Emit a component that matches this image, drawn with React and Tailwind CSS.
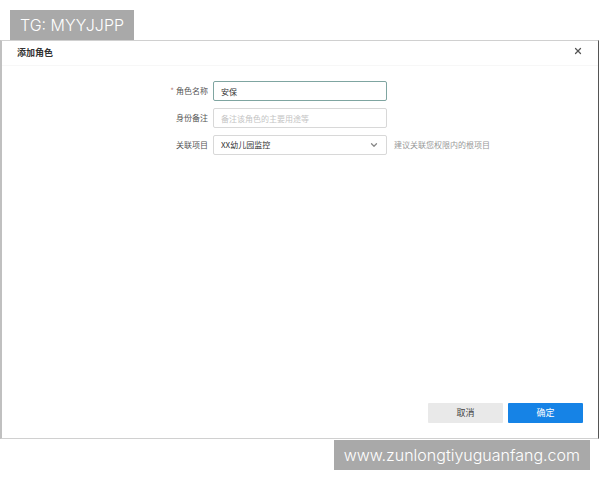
import { ChevronDown, X } from 'lucide-react';

const fieldClass =
  'h-5 w-full rounded-[2px] border bg-white px-[7px] text-[8px] leading-4 text-[#333] outline-none placeholder:text-[#c4c4c4]';

function Field({ id, label, required, hint, children }) {
  return (
    <div className="grid grid-cols-[206fr_174fr_206fr] items-center gap-x-[5px]">
      <label
        htmlFor={id}
        className="text-right text-[8px] leading-5 text-[#555]"
      >
        {required && <span className="mr-0.5 text-[#b08080]">*</span>}
        {label}
      </label>
      <div className="relative flex">{children}</div>
      {hint && <p className="pl-0.5 text-[8px] leading-5 text-[#999]">{hint}</p>}
    </div>
  );
}

function Banner({ children, className }) {
  return (
    <p
      className={`${className} h-[30px] bg-[#a9a9a9] px-2.5 font-['Inter',sans-serif] text-[16px] leading-[30px] font-light text-white`}
    >
      {children}
    </p>
  );
}

export default function App() {
  return (
    <div className="flex min-h-screen flex-col bg-white font-['Noto_Sans_CJK_SC',sans-serif]">
      <Banner className="mt-2.5 ml-2.5 self-start">TG: MYYJJPP</Banner>

      <section
        role="dialog"
        aria-labelledby="dialog-title"
        className="mr-px flex flex-1 flex-col border-y border-r border-l-2 border-y-[#d0d0d0] border-r-[#555] border-l-[#c0c0c0]"
      >
        {/* Header */}
        <header className="flex h-[25px] items-center justify-between border-b border-[#f7f7f7] pr-[15px] pl-[15px]">
          <h1
            id="dialog-title"
            className="text-[9px] leading-4 font-bold text-[#333]"
          >
            添加角色
          </h1>
          <button type="button" aria-label="关闭" className="-mt-1 text-[#555]">
            <X className="size-2.5" strokeWidth={3} />
          </button>
        </header>

        {/* Form */}
        <form className="flex flex-1 flex-col gap-[7px] pt-[15px]">
          <Field id="role-name" label="角色名称" required>
            <input
              id="role-name"
              defaultValue="安保"
              className={`${fieldClass} border-[#7fa5a1]`}
            />
          </Field>
          <Field id="role-note" label="身份备注">
            <input
              id="role-note"
              placeholder="备注该角色的主要用途等"
              className={`${fieldClass} border-[#d8d8d8]`}
            />
          </Field>
          <Field id="project" label="关联项目" hint="建议关联您权限内的根项目">
            <select
              id="project"
              className={`${fieldClass} appearance-none border-[#d8d8d8]`}
            >
              <option>XX幼儿园监控</option>
            </select>
            <ChevronDown
              className="pointer-events-none absolute top-[5px] right-2 size-2.5 text-[#888]"
              strokeWidth={3}
            />
          </Field>
        </form>

        {/* Actions */}
        <footer className="flex justify-end gap-[5px] pr-[15px] pb-[15px]">
          <button
            type="button"
            className="h-5 w-[75px] rounded-[1px] bg-[#e9e9e9] text-[9px] leading-5 text-[#444]"
          >
            取消
          </button>
          <button
            type="button"
            className="h-5 w-[75px] rounded-[1px] bg-[#1683e6] text-[9px] leading-5 text-white"
          >
            确定
          </button>
        </footer>
      </section>

      <Banner className="mt-px mr-2.5 mb-2.5 self-end">
        www.zunlongtiyuguanfang.com
      </Banner>
    </div>
  );
}
